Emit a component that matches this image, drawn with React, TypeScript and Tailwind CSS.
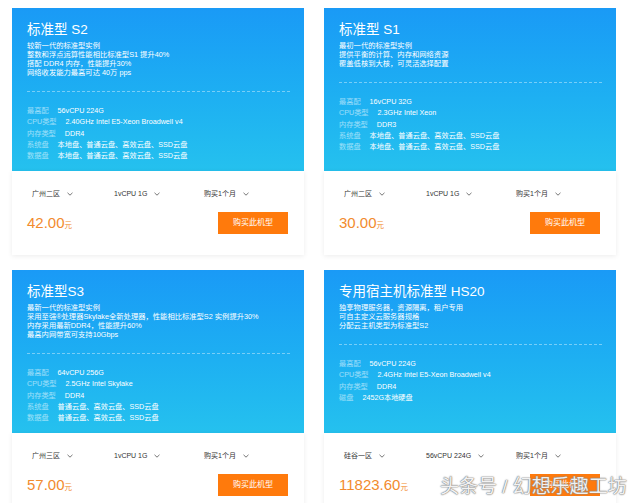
import React from "react"

const font = "font-['Liberation_Sans','Noto_Sans_CJK_SC',sans-serif]"

type Spec = { label: string, value: string }

type Plan = {
	title: string
	desc: string[]
	specs: Spec[]
	region: string
	cpu: string
	price: string
}

const plans: Plan[] = [
	{
		title: "标准型 S2",
		desc: ["较新一代的标准型实例", "整数和浮点运算性能相比标准型S1 提升40%", "搭配 DDR4 内存，性能提升30%", "网络收发能力最高可达 40万 pps"],
		specs: [
			{ label: "最高配", value: "56vCPU 224G" },
			{ label: "CPU类型", value: "2.40GHz Intel E5-Xeon Broadwell v4" },
			{ label: "内存类型", value: "DDR4" },
			{ label: "系统盘", value: "本地盘、普通云盘、高效云盘、SSD云盘" },
			{ label: "数据盘", value: "本地盘、普通云盘、高效云盘、SSD云盘" },
		],
		region: "广州二区",
		cpu: "1vCPU 1G",
		price: "42.00",
	},
	{
		title: "标准型 S1",
		desc: ["最初一代的标准型实例", "提供平衡的计算、内存和网络资源", "覆盖低核到大核，可灵活选择配置"],
		specs: [
			{ label: "最高配", value: "16vCPU 32G" },
			{ label: "CPU类型", value: "2.3GHz Intel Xeon" },
			{ label: "内存类型", value: "DDR3" },
			{ label: "系统盘", value: "本地盘、普通云盘、高效云盘、SSD云盘" },
			{ label: "数据盘", value: "本地盘、普通云盘、高效云盘、SSD云盘" },
		],
		region: "广州二区",
		cpu: "1vCPU 1G",
		price: "30.00",
	},
	{
		title: "标准型S3",
		desc: ["最新一代的标准型实例", "采用至强®处理器Skylake全新处理器，性能相比标准型S2 实例提升30%", "内存采用最新DDR4，性能提升60%", "最高内网带宽可支持10Gbps"],
		specs: [
			{ label: "最高配", value: "64vCPU 256G" },
			{ label: "CPU类型", value: "2.5GHz Intel Skylake" },
			{ label: "内存类型", value: "DDR4" },
			{ label: "系统盘", value: "普通云盘、高效云盘、SSD云盘" },
			{ label: "数据盘", value: "普通云盘、高效云盘、SSD云盘" },
		],
		region: "广州三区",
		cpu: "1vCPU 1G",
		price: "57.00",
	},
	{
		title: "专用宿主机标准型 HS20",
		desc: ["独享物理服务器，资源隔离，租户专用", "可自主定义云服务器规格", "分配云主机类型为标准型S2"],
		specs: [
			{ label: "最高配", value: "56vCPU 224G" },
			{ label: "CPU类型", value: "2.4GHz Intel E5-Xeon Broadwell v4" },
			{ label: "内存类型", value: "DDR4" },
			{ label: "磁盘", value: "2452G本地硬盘" },
		],
		region: "硅谷一区",
		cpu: "56vCPU 224G",
		price: "11823.60",
	},
]

const Chevron = () => (
	<svg width="6" height="4" viewBox="0 0 6 4" className="ml-[7px]">
		<polyline points="0.5,0.8 3,3.2 5.5,0.8" fill="none" stroke="#666" strokeWidth="0.9" />
	</svg>
)

const Select = ({ text, w }: { text: string, w: string }) => (
	<div className={`flex items-center ${w}`}>
		<span className="text-[7px] leading-[12px] text-[#333]">{text}</span>
		<Chevron />
	</div>
)

const Card = ({ plan }: { plan: Plan }) => {
	return (
		<div className="w-[292px]">
			<div className="h-[163px] bg-gradient-to-b from-[#1a9af6] to-[#25c1ee] pt-[14px] pl-[15px] pr-[14px] text-white">
				<h2 className="text-[13.5px] leading-[16px] font-normal">{plan.title}</h2>
				<div className="mt-[3px] text-[7.3px] leading-[9px]">
					{plan.desc.map((d, i) => (
						<p key={i} className="whitespace-nowrap">{d}</p>
					))}
				</div>
				<div className="mt-[14px] border-t border-dashed border-white/40"></div>
				<div className="mt-[13px] text-[7.2px] leading-[11.3px]">
					{plan.specs.map((s, i) => (
						<p key={i} className="whitespace-nowrap">
							<span className="text-white/55">{s.label}</span>
							<span className="ml-[9px]">{s.value}</span>
						</p>
					))}
				</div>
			</div>
			<div className="h-[84px] bg-white shadow-[0_1px_5px_rgba(0,0,0,0.08)] pt-[17px] pl-[20px] pr-[16px]">
				<div className="flex">
					<Select text={plan.region} w="w-[82px]" />
					<Select text={plan.cpu} w="w-[90px]" />
					<Select text="购买1个月" w="w-[80px]" />
				</div>
				<div className="mt-[12px] -ml-[5px] flex items-center justify-between">
					<div className="text-[#f28b2e] flex items-baseline">
						<span className="text-[15px] leading-[22px]">{plan.price}</span>
						<span className="text-[7.5px]">元</span>
					</div>
					<button className="w-[70px] h-[22px] bg-[#ff7a0c] text-white text-[8px]">购买此机型</button>
				</div>
			</div>
		</div>
	)
}

export default function App() {
	return (
		<div className={`relative w-[640px] h-[503px] overflow-hidden bg-white ${font}`}>
			<div className="grid grid-cols-[292px_292px] gap-x-[20px] gap-y-[15px] pt-[8px] pl-[12px]">
				{plans.map((p, i) => (
					<Card key={i} plan={p} />
				))}
			</div>
			<div className="absolute left-[440px] top-[475px] text-[19px] leading-[24px] whitespace-nowrap text-white/90 [text-shadow:0_0_1px_#777,0_0_1px_#777,0_0_2px_#999]">
				头条号 / 幻想乐趣工坊
			</div>
		</div>
	)
}
